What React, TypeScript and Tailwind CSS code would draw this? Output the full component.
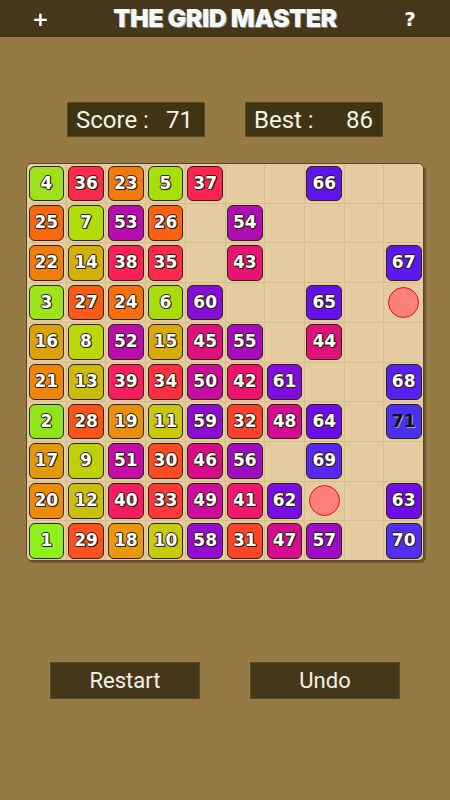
const rows: number[][] = [
  [4, 36, 23, 5, 37, 0, 0, 66, 0, 0],
  [25, 7, 53, 26, 0, 54, 0, 0, 0, 0],
  [22, 14, 38, 35, 0, 43, 0, 0, 0, 67],
  [3, 27, 24, 6, 60, 0, 0, 65, 0, -1],
  [16, 8, 52, 15, 45, 55, 0, 44, 0, 0],
  [21, 13, 39, 34, 50, 42, 61, 0, 0, 68],
  [2, 28, 19, 11, 59, 32, 48, 64, 0, 71],
  [17, 9, 51, 30, 46, 56, 0, 69, 0, 0],
  [20, 12, 40, 33, 49, 41, 62, -1, 0, 63],
  [1, 29, 18, 10, 58, 31, 47, 57, 0, 70],
];

// tile colour by number, green -> orange -> red -> magenta -> violet
const colors = [
  "#8ef01c", "#90e61a", "#9de41a", "#9ee01a", "#a6df0a", "#a8dc0a", "#b2dc0a",
  "#bcd808", "#bfd00a", "#c6cc0c", "#c8c80c", "#c8c00c", "#ccbc0a", "#d4b00a",
  "#d8aa0a", "#dca20a", "#e09a0a", "#e8980a", "#e8900c", "#ee8a0a", "#ef850a",
  "#f07e0c", "#f47a0a", "#f6700e", "#f8680e", "#f86212", "#fa5a14", "#fa5418",
  "#fc5020", "#fc4a22", "#fc4428", "#fc4030", "#fc3838", "#fc3040", "#fc2a48",
  "#fc2a4c", "#fc2450", "#fc2058", "#f81c60", "#f41c64", "#f0186c", "#ec1470",
  "#e81474", "#e0107c", "#dc1080", "#d80c88", "#d40c90", "#d00c94", "#cc0c9c",
  "#c80ca0", "#c40ca8", "#bc0cac", "#b80cb0", "#b00cb4", "#a40cbc", "#a00cc0",
  "#9c0cc8", "#940cd0", "#8c0cd4", "#880cd8", "#800ce0", "#780ce4", "#700ce8",
  "#6c0ce8", "#6410ec", "#6014ec", "#5c18f0", "#5820f0", "#5428f0", "#5030f0",
  "#4c30f0",
];

function Cell({ n }: { n: number }) {
  return (
    <div className="bg-[#e4cba0] p-[1.5px] flex items-center justify-center">
      {n > 0 && (
        <div
          className={`w-full h-full rounded-[6px] border border-[#2e2410] flex items-center justify-center font-['DejaVu_Sans',sans-serif] font-bold text-[17px] ${
            n === 71
              ? "text-[#111] [text-shadow:1px_1px_0_#9aa]"
              : "text-white [text-shadow:1px_1px_0_#2a1d08,-1px_0_0_#2a1d08,0_-1px_0_#2a1d08,1px_0_0_#2a1d08,0_1px_0_#2a1d08]"
          }`}
          style={{ backgroundColor: colors[n - 1] }}
        >
          {n}
        </div>
      )}
      {n < 0 && (
        <div className="w-[31px] h-[31px] rounded-full bg-[#ff7f7a] border border-[#e01010]" />
      )}
    </div>
  );
}

export default function App() {
  return (
    <div className="w-[450px] h-[800px] bg-[#967a46] flex flex-col font-['Roboto',sans-serif]">
      <div className="h-[37px] bg-[#45381a] flex items-center justify-between px-[32px] text-white">
        <span className="font-['DejaVu_Sans',sans-serif] font-bold text-[20px] w-[16px] text-center">+</span>
        <h1 className="font-['Inter',sans-serif] font-black text-[25px] tracking-[-0.5px] text-[#f7f7f7] [text-shadow:1px_1px_0_#8a8a8a]">
          THE GRID MASTER
        </h1>
        <span className="font-['DejaVu_Sans',sans-serif] font-bold text-[20px] w-[16px] text-center">?</span>
      </div>

      <div className="mt-[65px] flex justify-center gap-[40px] text-[24px] text-[#f4f1e6]">
        <div className="w-[138px] h-[35px] bg-[#3f3512] border border-[#5a4a22] flex items-center justify-between pl-[8px] pr-[11px]">
          <span>Score :</span>
          <span>71</span>
        </div>
        <div className="w-[138px] h-[35px] bg-[#3f3512] border border-[#5a4a22] flex items-center justify-between pl-[8px] pr-[9px]">
          <span>Best :</span>
          <span>86</span>
        </div>
      </div>

      <div className="mt-[26px] mx-auto w-[398px] h-[398px] rounded-[6px] border border-[#5a4626] bg-[#d8bd8d] shadow-[2px_2px_0_#6e5630] overflow-hidden">
        <div className="grid grid-cols-10 grid-rows-10 gap-px w-full h-full">
          {rows.flat().map((n, i) => (
            <Cell key={i} n={n} />
          ))}
        </div>
      </div>

      <div className="mt-[101px] flex justify-center gap-[50px] text-[22px] text-[#f4f1e6]">
        <button className="w-[150px] h-[37px] bg-[#45381a] border border-[#5a4a22] flex items-center justify-center">
          Restart
        </button>
        <button className="w-[150px] h-[37px] bg-[#45381a] border border-[#5a4a22] flex items-center justify-center">
          Undo
        </button>
      </div>
    </div>
  );
}
